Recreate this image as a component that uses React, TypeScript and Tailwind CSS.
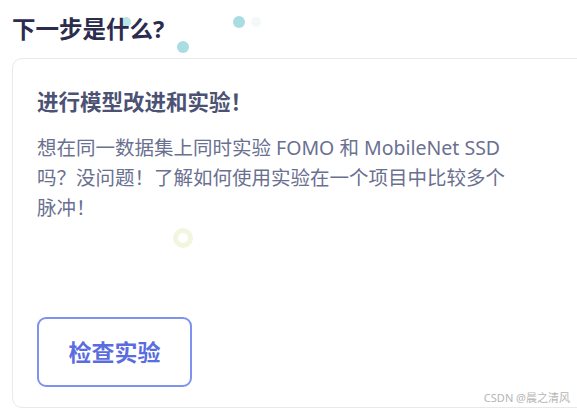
import React from "react";

export default function App() {
  const font = { fontFamily: '"Noto Sans", "Noto Sans CJK SC", sans-serif' };
  return (
    <div className="relative w-[577px] h-[411px] overflow-hidden bg-white" style={font}>
      {/* decorative confetti */}
      <div className="absolute left-[121px] top-[17px] w-[10px] h-[10px] rounded-full bg-[#a9dde2] opacity-80" />
      <div className="absolute left-[233px] top-[16px] w-[12px] h-[12px] rounded-full bg-[#a9dde2]" />
      <div className="absolute left-[251px] top-[17px] w-[10px] h-[10px] rounded-full bg-[#f3f8f8]" />
      <div className="absolute left-[177px] top-[41px] w-[12px] h-[12px] rounded-full bg-[#a9dde2]" />
      <div className="absolute left-[173px] top-[228px] w-[20px] h-[20px] rounded-full border-[5px] border-[#f2f6df]" />

      <h2 className="pl-3 pt-[14px] text-[23.5px] leading-[30px] font-bold text-[#2c2c4e] relative">
        下一步是什么?
      </h2>

      <div className="ml-3 mt-[14px] w-[590px] h-[350px] border border-[#e9e9ec] rounded-[10px] flex flex-col px-6 pt-[28px] pb-[20px]">
        <h3 className="text-[21.5px] leading-[30px] font-bold text-[#4b5274]">进行模型改进和实验！</h3>
        <p className="mt-4 w-[480px] text-[19.5px] leading-[30px] text-[#6a7090]">
          想在同一数据集上同时实验 FOMO 和 MobileNet SSD 吗？没问题！了解如何使用实验在一个项目中比较多个脉冲！
        </p>
        <button className="mt-auto w-[155px] h-[70px] border-2 border-[#8092f0] rounded-[9px] text-[23px] font-bold text-[#5a6de0] flex items-center justify-center">
          检查实验
        </button>
      </div>

      <div className="absolute right-[7px] bottom-[6px] text-[11px] leading-[14px] text-[#b5b5b5]">
        CSDN @晨之清风
      </div>
    </div>
  );
}
